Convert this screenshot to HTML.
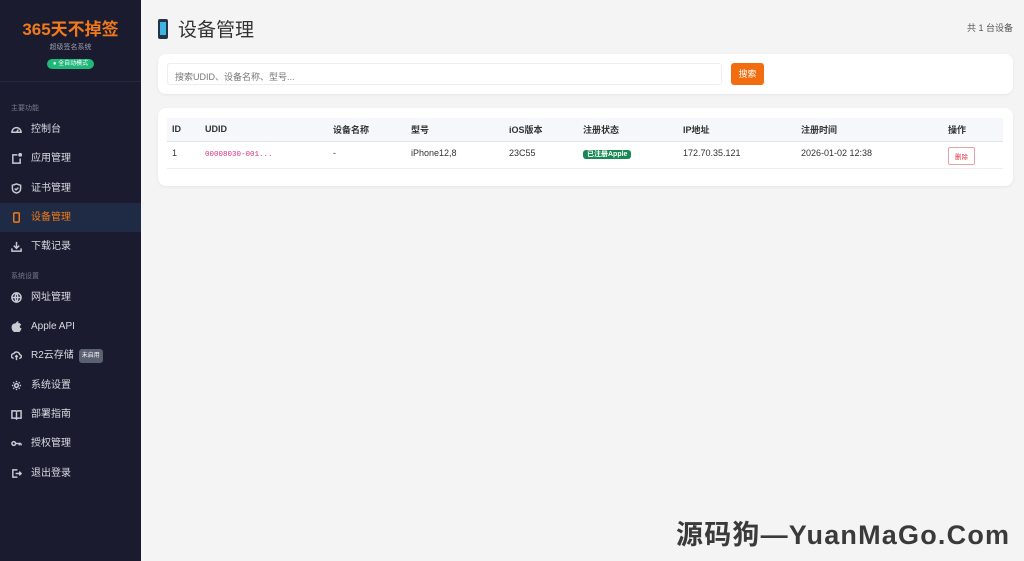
<!DOCTYPE html>
<html><head><meta charset="utf-8"><style>
*{margin:0;padding:0;box-sizing:border-box}
body{width:1024px;height:561px;overflow:hidden;background:#f4f4f5;font-family:"Liberation Sans","Noto Sans CJK SC",sans-serif;position:relative}
.sb{position:absolute;left:0;top:0;width:141px;height:561px;background:#1b1b2f;color:#d4d6de}
.logo{text-align:center;padding-top:20px;height:82px;border-bottom:1px solid #262840}
.logo h1{color:#f07a1a;font-size:17px;font-weight:bold;line-height:20px}
.logo .s{font-size:7px;color:#9a9cab;margin-top:2px}
.logo .b{display:inline-block;margin-top:5px;background:#1fb87a;color:#fff;font-size:6px;border-radius:6px;padding:1px 6px;line-height:8px}
.sec{font-size:7px;color:#777a8c;padding-left:11px;position:absolute}
.it{position:absolute;left:0;width:141px;height:29px;display:flex;align-items:center;padding-left:11px;font-size:10px;color:#d8dae2;line-height:12px}
.it svg{display:block;flex:none;width:11px;height:11px;margin-right:9px;stroke:#c8cad4;fill:none;stroke-width:1.6}
.it.a{background:#1f2a44;color:#f07a1a}
.it.a svg{stroke:#f07a1a}
.tag{background:#5b6072;color:#fff;font-size:6px;border-radius:3px;padding:1px 3px;margin-left:5px}
.main{position:absolute;left:141px;top:0;right:0}
.title{position:absolute;left:17px;top:15px;font-size:19px;color:#333;display:flex;align-items:center}
.ph{width:10px;height:20px;background:#243447;border-radius:2px;margin-right:10px;position:relative}
.ph:after{content:"";position:absolute;left:2px;top:3px;width:6px;height:13px;background:#3fb4e0}
.cnt{position:absolute;right:11px;top:21px;font-size:9px;color:#555}
.card{position:absolute;left:17px;right:11px;background:#fff;border-radius:8px;box-shadow:0 1px 3px rgba(0,0,0,.06)}
.inp{position:absolute;left:9px;top:9px;width:555px;height:22px;border:1px solid #eee;border-radius:3px;font-size:9px;color:#777;padding:6px 7px}
.btn{position:absolute;left:573px;top:9px;width:33px;height:22px;background:#f26d0f;border-radius:3px;color:#fff;font-size:9px;text-align:center;line-height:22px}
table{position:absolute;left:9px;top:10px;width:836px;border-collapse:collapse;font-size:9px;color:#333}
th{background:#f5f7fa;text-align:left;font-weight:bold;height:23px;padding-left:5px;border-bottom:1px solid #dfe3ea}
td{height:27px;padding-left:5px;border-bottom:1px solid #eee;vertical-align:top;padding-top:6px}
.ud{font-family:"Liberation Mono",monospace;color:#d63384;font-size:7.5px}
.ok{background:#198754;color:#fff;font-size:7px;font-weight:bold;border-radius:3px;padding:1px 4px}
.del{display:inline-block;border:1px solid #e8a0a8;color:#dc3545;font-size:6.5px;border-radius:2px;padding:3px 6px;margin-top:-1px}
.wm{position:absolute;left:676px;top:513px;font-size:27px;font-weight:bold;color:#3a3a3a;letter-spacing:1.2px;white-space:nowrap}
</style></head><body>
<div class="sb">
<div class="logo"><h1>365天不掉签</h1><div class="s">超级签名系统</div><div class="b">● 全自动模式</div></div>
<div class="sec" style="top:103px">主要功能</div>
<div class="it" style="top:115px"><svg viewBox="0 0 12 12"><path d="M1 9a5 5 0 0 1 10 0z M6 9l2-3"/></svg>控制台</div>
<div class="it" style="top:144px"><svg viewBox="0 0 12 12"><path d="M7 2H2v9h8V6"/><circle cx="10" cy="2" r="1.3" fill="#c8cad4"/></svg>应用管理</div>
<div class="it" style="top:174px"><svg viewBox="0 0 12 12"><path d="M6 1l4.5 1.5V6c0 3-2.5 4.5-4.5 5C4 10.5 1.5 9 1.5 6V2.5z M4 6l1.5 1.5L8 5"/></svg>证书管理</div>
<div class="it a" style="top:203px"><svg viewBox="0 0 12 12"><rect x="3" y="1" width="6" height="10" rx="1"/></svg>设备管理</div>
<div class="it" style="top:232px"><svg viewBox="0 0 12 12"><path d="M6 1v7M3 5l3 3 3-3M1 8v3h10V8"/></svg>下载记录</div>
<div class="sec" style="top:271px">系统设置</div>
<div class="it" style="top:283px"><svg viewBox="0 0 12 12"><circle cx="6" cy="6" r="5"/><path d="M1 6h10M6 1c-2 3-2 7 0 10M6 1c2 3 2 7 0 10"/></svg>网址管理</div>
<div class="it" style="top:312px"><svg viewBox="0 0 12 12"><path d="M6 3.5c1-1 3-1 4 .5-2 1-1.5 4 .5 4.5-.5 1.5-1.5 3-2.5 3s-1-.5-2-.5-1.5.5-2 .5C2.5 11 1 8 1.5 6 2 3.5 4.5 3 6 3.5zM6 3c0-1 1-2 2-2" fill="#c8cad4"/></svg><span>Apple API</span></div>
<div class="it" style="top:341px"><svg viewBox="0 0 12 12"><path d="M3 9a2.5 2.5 0 0 1 0-5 3.5 3.5 0 0 1 6.5 1A2 2 0 0 1 9 9M6 11V6M4.5 7.5L6 6l1.5 1.5"/></svg>R2云存储<span class="tag">未启用</span></div>
<div class="it" style="top:371px"><svg viewBox="0 0 12 12"><circle cx="6" cy="6" r="2"/><path d="M6 1v1.5M6 9.5V11M1 6h1.5M9.5 6H11M2.5 2.5l1 1M8.5 8.5l1 1M2.5 9.5l1-1M8.5 3.5l1-1"/></svg>系统设置</div>
<div class="it" style="top:400px"><svg viewBox="0 0 12 12"><path d="M1 2h4l1 1 1-1h4v8H7l-1 1-1-1H1zM6 3v8"/></svg>部署指南</div>
<div class="it" style="top:429px"><svg viewBox="0 0 12 12"><circle cx="3" cy="6" r="2"/><path d="M5 6h6M9 6v2M11 6v2"/></svg>授权管理</div>
<div class="it" style="top:459px"><svg viewBox="0 0 12 12"><path d="M7 2H2v8h5M5 6h6M9 4l2 2-2 2"/></svg>退出登录</div>
</div>
<div class="main">
<div class="title"><div class="ph"></div>设备管理</div>
<div class="cnt">共 1 台设备</div>
<div class="card" style="top:54px;height:40px"><div class="inp">搜索UDID、设备名称、型号...</div><div class="btn">搜索</div></div>
<div class="card" style="top:108px;height:78px">
<table>
<tr><th style="width:33px">ID</th><th style="width:128px">UDID</th><th style="width:78px">设备名称</th><th style="width:98px">型号</th><th style="width:74px">iOS版本</th><th style="width:100px">注册状态</th><th style="width:118px">IP地址</th><th style="width:147px">注册时间</th><th>操作</th></tr>
<tr><td>1</td><td><span class="ud">00008030-001...</span></td><td>-</td><td>iPhone12,8</td><td>23C55</td><td><span class="ok">已注册Apple</span></td><td>172.70.35.121</td><td>2026-01-02 12:38</td><td><span class="del">删除</span></td></tr>
</table></div>
</div>
<div class="wm">源码狗—YuanMaGo.Com</div>
</body></html>
